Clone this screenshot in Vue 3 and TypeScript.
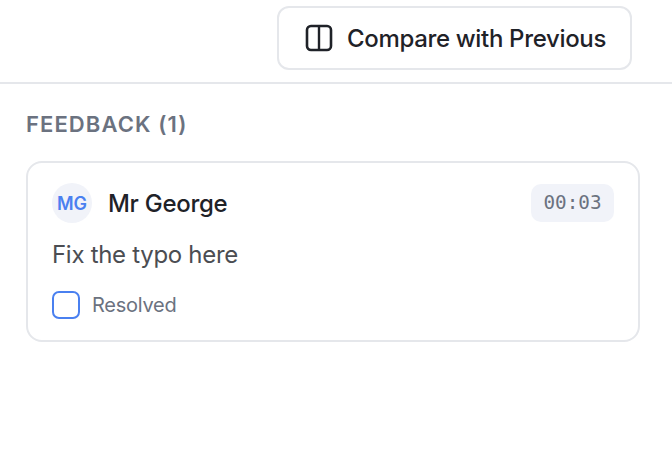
<script setup lang="ts">
const feedback = {
  initials: 'MG',
  name: 'Mr George',
  time: '00:03',
  text: 'Fix the typo here'
};
</script>

<template>
  <div class="panel">
    <div class="toolbar">
      <button class="compare-btn">
        <svg class="compare-icon" width="28" height="28" viewBox="0 0 28 28" fill="none">
          <rect x="2" y="2" width="24" height="24" rx="4" stroke="#1f2228" stroke-width="2.6" />
          <path d="M14 2v24" stroke="#1f2228" stroke-width="2.4" />
        </svg>
        <span>Compare with Previous</span>
      </button>
    </div>

    <div class="content">
      <h3 class="heading">FEEDBACK (1)</h3>

      <div class="card">
        <div class="card-head">
          <div class="author">
            <div class="avatar">{{ feedback.initials }}</div>
            <span class="name">{{ feedback.name }}</span>
          </div>
          <span class="time">{{ feedback.time }}</span>
        </div>
        <p class="text">{{ feedback.text }}</p>
        <label class="resolve">
          <span class="checkbox"></span>
          <span>Resolved</span>
        </label>
      </div>
    </div>
  </div>
</template>

<style scoped>
.panel {
  width: 672px;
  height: 462px;
  background: #fff;
  font-family: Inter, "Liberation Sans", sans-serif;
  overflow: hidden;
}

.toolbar {
  display: flex;
  justify-content: flex-end;
  height: 76px;
  padding: 6px 40px 0 0;
  border-bottom: 2px solid #e5e7eb;
}

.compare-btn {
  display: flex;
  align-items: center;
  gap: 14px;
  width: 355px;
  height: 64px;
  padding: 0 26px;
  background: #fff;
  border: 2px solid #e5e7eb;
  border-radius: 12px;
  font-family: inherit;
  font-size: 24px;
  font-weight: 450;
  letter-spacing: -0.33px;
  color: #1f2228;
  box-sizing: border-box;
  white-space: nowrap;
}

.compare-icon {
  flex-shrink: 0;
}

.content {
  padding: 28px 32px 0 26px;
}

.heading {
  margin: 0 0 25px;
  font-size: 22px;
  line-height: 24px;
  font-weight: 600;
  letter-spacing: 1.1px;
  color: #6b7280;
}

.card {
  height: 181px;
  padding: 20px 24px 0;
  border: 2px solid #e5e7eb;
  border-radius: 16px;
  box-sizing: border-box;
}

.card-head {
  display: flex;
  align-items: center;
  justify-content: space-between;
}

.author {
  display: flex;
  align-items: center;
  gap: 16px;
}

.avatar {
  display: flex;
  align-items: center;
  justify-content: center;
  width: 40px;
  height: 40px;
  border-radius: 50%;
  background: #f1f3f9;
  color: #4a80f0;
  font-size: 18px;
  font-weight: 600;
}

.name {
  font-size: 24px;
  font-weight: 450;
  letter-spacing: -0.28px;
  color: #1f2228;
}

.time {
  width: 83px;
  padding: 6px 0;
  border-radius: 10px;
  background: #f1f3f9;
  color: #6b7280;
  font-family: "DejaVu Sans Mono", monospace;
  font-size: 19.3px;
  line-height: 26px;
  text-align: center;
}

.text {
  margin: 15px 0 0;
  font-size: 24px;
  line-height: 34px;
  letter-spacing: -0.3px;
  color: #4b4d52;
}

.resolve {
  display: flex;
  align-items: center;
  gap: 12px;
  margin-top: 19px;
  font-size: 20px;
  letter-spacing: -0.25px;
  color: #6b7280;
}

.checkbox {
  width: 28px;
  height: 28px;
  border: 2px solid #4a80f0;
  border-radius: 7px;
  box-sizing: border-box;
}
</style>
